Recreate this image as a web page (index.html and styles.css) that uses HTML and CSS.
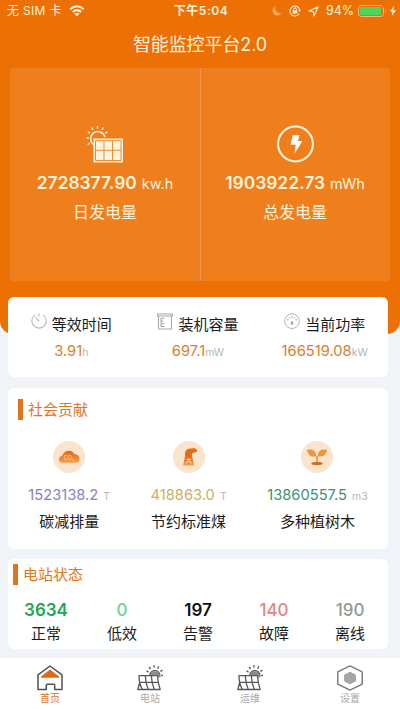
FILE: index.html
```html
<!DOCTYPE html>
<html lang="zh-CN">
<head>
<meta charset="utf-8">
<title>智能监控平台2.0</title>
<link rel="stylesheet" href="styles.css">
</head>
<body>
<svg width="0" height="0" class="defs">
  <defs>
    <linearGradient id="amber" x1="0" y1="0" x2="0" y2="1"><stop offset="0" stop-color="#e2660f"/><stop offset="1" stop-color="#f5a04b"/></linearGradient>
    <symbol id="station" viewBox="0 0 26 26">
      <g fill="none" stroke="#565656" stroke-width="1.3" stroke-linejoin="round" stroke-linecap="round">
        <path d="M2 10.7H20.5Q21 19 23.2 24.5H5.5Q2 19 2 10.7ZM3.3 17.3H21.3M8.3 10.7Q8.5 18.5 11.3 24.5M14.4 10.7Q14.6 18.5 17.3 24.5M2.8 17L.8 24.5H5.5"/>
        <path d="M12.8 9.8A5 5 0 0 1 22.8 11.5"/>
      </g>
      <path d="M13.4 10A4.8 4.8 0 0 1 22.8 12L21 13V10.2Z" fill="#8b8b8b"/>
      <path d="M10 6.2L11 6.8M12.5 2.4L13.2 3.5M17 .8V2.1M21.5 1.9L20.9 3.2M25 5.4L23.9 6.1M25.4 10.5H24.8" stroke="#565656" stroke-width="1.4" stroke-linecap="round"/>
    </symbol>
  </defs>
</svg>
<main class="screen">
  <header class="hero">
    <div class="status">
      <div class="carrier"><span>无 SIM 卡</span>
        <svg width="16" height="12" viewBox="0 0 16 12" fill="none" stroke="#fff2dc" stroke-width="2.1"><path d="M1.2 4.3Q8-1.8 14.8 4.3M3.8 7Q8 3.1 12.2 7"/><path d="M8 11.3L5.4 8.8Q8 6.8 10.6 8.8Z" fill="#fff2dc" stroke="none"/></svg>
      </div>
      <div class="clock">下午5:04</div>
      <div class="indicators">
        <svg class="moon" width="10" height="10" viewBox="0 0 10 10"><path d="M3.5.5A4.7 4.7 0 1 0 9.5 7 5 5 0 0 1 3.5.5Z" fill="#f8a765"/></svg>
        <svg class="lock" width="12" height="12" viewBox="0 0 12 12" fill="none" stroke="#ffe9cf"><path d="M10.2 8.7A5 5 0 1 1 10.7 4.5" stroke-width="1.1"/><path d="M9.1 4.8H12L10.7 7Z" fill="#ffe9cf" stroke="none"/><path d="M3.6 5.3H8.4V8.7H3.6Z" fill="#ffe9cf" stroke="none"/><path d="M4.6 5.5V4.3A1.4 1.4 0 0 1 7.4 4.3V5.5"/></svg>
        <svg class="arrow" width="11" height="11" viewBox="0 0 11 11"><path d="M10 .9L6 10L5.3 5.7L1 5Z" fill="none" stroke="#ffe9cf" stroke-width="1.2" stroke-linejoin="round"/></svg>
        <span class="percent">94%</span>
        <svg class="battery" width="29" height="12" viewBox="0 0 29 12"><rect x=".5" y=".5" width="25" height="11" rx="2.8" fill="none" stroke="#f9b67c"/><rect x="2" y="2" width="21" height="8" rx="1.3" fill="#4cd75c"/><path d="M27 4Q28.5 6 27 8Z" fill="#f9b67c"/></svg>
        <svg width="6" height="10" viewBox="0 0 6 10"><path d="M4 0L0 5.6H2.6L1.8 10L6 4.2H3.3Z" fill="#fff2dc"/></svg>
      </div>
    </div>
    <h1>智能监控平台2.0</h1>
    <section class="totals">
      <div class="total">
        <svg width="38" height="38" viewBox="0 0 38 38"><path d="M8 20A7.3 7.3 0 1 1 19 12" fill="none" stroke="#fff4df" stroke-width="1.5"/><g stroke="#fff4df" stroke-width="1.4"><path d="M11.5 1V3.5M5.8 2.6L7 4.8M1.8 6.9L4 8M.5 13H2.8M1.6 19.5L3.8 18.2M17.2 2.5L16 4.8M21.5 6.8L19.3 8"/></g><path d="M7.5 13.5H37V37.5H7.5Z" fill="#fff4df"/><path d="M9.5 15.7H35V35.5H9.5ZM9.5 25.3H35M18 15.7V35.5M26.5 15.7V35.5" fill="none" stroke="#ef8b30" stroke-width="1"/></svg>
        <p class="amount"><b>2728377.90</b><span>kw.h</span></p>
        <p class="caption">日发电量</p>
      </div>
      <div class="total">
        <svg width="38" height="38" viewBox="0 0 38 38"><circle cx="19.5" cy="19" r="17.4" fill="none" stroke="#fff4df" stroke-width="2"/><path d="M16.7 10.2H23.5L22 16H26.5L18.5 28.7L19.7 19.7H14.7Z" fill="#fff"/></svg>
        <p class="amount"><b>1903922.73</b><span>mWh</span></p>
        <p class="caption">总发电量</p>
      </div>
    </section>
  </header>

  <section class="card metrics">
    <div class="metric">
      <p class="name"><svg width="16" height="17" viewBox="0 0 16 17" fill="none" stroke="#b9b9b9" stroke-width="1.1"><path d="M3.8 2.1A7.2 7.2 0 1 0 12.3 2.1M8 .5V3.6M4.5 4.3L8.3 8.3"/></svg><span>等效时间</span></p>
      <p class="reading">3.91<small>h</small></p>
    </div>
    <div class="metric">
      <p class="name"><svg width="16" height="17" viewBox="0 0 16 17" fill="none" stroke="#aaa" stroke-width="1.1"><path d="M.5 1H15.5V3H.5ZM1.5 3V16H14.5V3M4 5.3V13.5H7.5M4 5.3H7.5M4 8H6.3M4 10.7H7.5"/></svg><span>装机容量</span></p>
      <p class="reading">697.1<small>mW</small></p>
    </div>
    <div class="metric">
      <p class="name"><svg width="16" height="17" viewBox="0 0 16 17"><circle cx="8" cy="8.2" r="7.3" fill="none" stroke="#b5b5b5"/><path d="M3 6.8H4.6M5 4.2L6 5.3M8 3.3V4.7M11 4.2L10 5.3M13 6.8H11.4" stroke="#999"/><path d="M8 7.6L9.2 10A1.3 1.3 0 1 1 6.8 10Z" fill="#999"/></svg><span>当前功率</span></p>
      <p class="reading">166519.08<small>kW</small></p>
    </div>
  </section>

  <section class="card social">
    <h2>社会贡献</h2>
    <div class="contributions">
      <div class="contribution violet">
        <svg width="32" height="32" viewBox="0 0 32 32"><circle cx="16" cy="16" r="16" fill="#fbe4ce"/><path d="M8.8 21.8C5 21.8 4.7 15.7 9.3 14.6C11 8.8 19.2 7.8 21.4 13.1C27.7 13.4 28 21.8 23.5 21.8Z" fill="url(#amber)"/><text x="10.8" y="19" class="formula">CO₂</text></svg>
        <p class="sum">1523138.2<small>T</small></p><p class="topic">碳减排量</p>
      </div>
      <div class="contribution gold">
        <svg width="32" height="32" viewBox="0 0 32 32"><circle cx="16" cy="16" r="16" fill="#fbe4ce"/><path d="M10 24.5L12.3 14H18.8L21.3 24.5Z" fill="url(#amber)"/><path d="M12.3 14.5C11 9.8 15 6.4 19 7.8C20.5 6.4 22 7 22.3 8C25 8 24.7 11.3 22 11.4C20 12 19 11.5 18.7 14.5Z" fill="#e66e12"/><path d="M15.8 17V20L13 22M15.8 20L18.6 22M13.6 18.5H18" fill="none" stroke="#ffe0bf" stroke-width=".9"/></svg>
        <p class="sum">418863.0<small>T</small></p><p class="topic">节约标准煤</p>
      </div>
      <div class="contribution green">
        <svg width="32" height="32" viewBox="0 0 32 32"><circle cx="16" cy="16" r="16" fill="#fbe4ce"/><path d="M15.2 15.3C9 16.5 7.5 13.5 5.8 8.9C11 8 15.2 9 15.2 15.3ZM16.8 15.3C16.8 9.2 21 7.7 26.2 8.9C25 14 21.5 16.5 16.8 15.3Z" fill="#e9983d"/><path d="M16 15V22" stroke="#e8862d" stroke-width="1.5"/><ellipse cx="16" cy="22.5" rx="5.7" ry="1.6" fill="#db6515"/></svg>
        <p class="sum">13860557.5<small>m3</small></p><p class="topic">多种植树木</p>
      </div>
    </div>
  </section>

  <section class="card stations">
    <h2>电站状态</h2>
    <div class="states">
      <div class="state normal"><b>3634</b><span>正常</span></div>
      <div class="state low"><b>0</b><span>低效</span></div>
      <div class="state warning"><b>197</b><span>告警</span></div>
      <div class="state fault"><b>140</b><span>故障</span></div>
      <div class="state offline"><b>190</b><span>离线</span></div>
    </div>
  </section>

  <nav class="tabs">
    <a class="tab active"><svg width="26" height="26" viewBox="0 0 26 26"><path d="M1 9.8L13 1L25 9.8V24.5H17.7V20.2Q17.7 19.2 16.7 19.2H10.3Q9.3 19.2 9.3 20.2V24.5H1Z" fill="none" stroke="#515151" stroke-width="1.5" stroke-linejoin="round"/><path d="M13 4.6L22 11.6V12.8H4V11.6Z" fill="#e06716"/></svg><span>首页</span></a>
    <a class="tab"><svg width="26" height="26"><use href="#station"/></svg><span>电站</span></a>
    <a class="tab"><svg width="26" height="26"><use href="#station"/></svg><span>运维</span></a>
    <a class="tab"><svg width="26" height="26" viewBox="0 0 26 26" stroke-linejoin="round"><path d="M13 .9L25.2 6.8V19.2L13 25.1L.8 19.2V6.8Z" fill="none" stroke="#777" stroke-width="1.4"/><path d="M13 7.2L18.5 10V16L13 18.8L7.5 16V10Z" fill="#a5a5a5" stroke="#a5a5a5"/></svg><span>设置</span></a>
  </nav>
</main>
</body>
</html>
```
FILE: styles.css
```css
* { box-sizing: border-box; }
body { margin: 0; background: #f0f4f8; font-family: Inter, "Noto Sans CJK SC", sans-serif; }
h1, h2, p { margin: 0; font-weight: 400; white-space: nowrap; }
svg { display: block; flex: none; }
.defs { position: absolute; }
.screen { width: 400px; height: 711px; overflow: hidden; display: flex; flex-direction: column; }

.hero { height: 334px; flex: none; padding: 0 10px; background: #ec7004; border-radius: 0 0 13px 13px; color: #fff2dc; }
.status { height: 22px; display: grid; grid-template-columns: 1fr auto 1fr; margin: 0 -6px 0 -3px; font-size: 12px; line-height: 22px; white-space: nowrap; }
.carrier { display: flex; align-items: center; gap: 7px; letter-spacing: .3px; }
.clock { font-weight: 600; letter-spacing: .55px; margin-right: 1px; }
.indicators { display: flex; align-items: center; justify-content: flex-end; }
.moon { margin-right: 7px; }
.lock { margin-right: 7px; }
.arrow { margin-right: 7px; }
.percent { font-size: 12.5px; margin-right: 4px; }
.battery { margin-right: 3px; }
h1 { height: 46px; line-height: 46px; font-size: 18px; text-align: center; letter-spacing: -.1px; }

.totals { height: 213px; display: grid; grid-template-columns: 1fr 1fr; background: #ee7f1c; border-radius: 4px; }
.total { display: flex; flex-direction: column; align-items: center; padding-top: 57px; }
.total + .total { border-left: 1px solid #f3954a; padding-right: 1px; }
.amount { display: flex; align-items: baseline; gap: 5px; margin-top: 8px; height: 24px; line-height: 24px; }
.amount b { font-size: 17.4px; font-weight: 600; }
.amount span { font-size: 14.5px; }
.caption { margin-top: 5px; height: 24px; line-height: 24px; font-size: 16px; }

.card { margin: 0 12px 0 8px; flex: none; background: #fff; border-radius: 6px; }
.metrics { height: 80px; margin-top: -37px; padding-top: 16px; display: grid; grid-template-columns: repeat(3, 1fr); }
.metric { display: flex; flex-direction: column; align-items: center; }
.name { display: flex; gap: 5px; height: 24px; line-height: 24px; font-size: 15px; color: #1b1b1b; }
.reading { margin-top: 2px; height: 24px; line-height: 24px; font-size: 14.7px; color: #da7d2b; }
small { color: #b5b5b5; font-size: 10.5px; }

h2 { display: flex; align-items: center; gap: 5px; height: 21px; font-size: 15px; line-height: 21px; color: #de761e; }
h2::before { content: ""; width: 5px; height: 21px; background: #de741b; }
.social { height: 161px; margin-top: 11px; padding-top: 11px; }
.social h2 { margin-left: 10px; }
.contributions { display: flex; justify-content: space-around; margin-top: 21px; }
.contribution { display: flex; flex-direction: column; align-items: center; }
.formula { font: 5.5px Inter, sans-serif; fill: #ffd7ad; }
.sum { margin-top: 10px; height: 24px; line-height: 24px; font-size: 14.7px; }
.sum small { margin-left: 5px; }
.violet .sum { color: #8583c3; }
.gold .sum { color: #d0ad65; }
.green .sum { color: #438f70; }
.topic { margin-top: 3px; height: 24px; line-height: 24px; font-size: 15px; color: #1b1b1b; }

.stations { height: 90px; margin-top: 10px; padding-top: 5px; }
.stations h2 { margin-left: 5px; }
.states { display: grid; grid-template-columns: repeat(5, 1fr); margin-top: 13px; }
.state { display: flex; flex-direction: column; align-items: center; }
.state b { height: 24px; line-height: 24px; font-size: 17px; font-weight: 500; }
.state span { height: 24px; line-height: 24px; font-size: 15px; color: #1b1b1b; }
.normal b { color: #26a453; font-weight: 600; }
.low b { color: #69d69b; }
.warning b { color: #111; font-weight: 600; }
.fault b { color: #e98383; }
.offline b { color: #969696; }

.tabs { height: 53px; flex: none; margin-top: 9px; padding-top: 7px; display: grid; grid-template-columns: repeat(4, 1fr); background: #fff; }
.tab { display: flex; flex-direction: column; align-items: center; font-size: 10px; line-height: 14px; color: #aaa; }
.tab svg { height: 26px; }
.tab.active { color: #dc7425; }
```
